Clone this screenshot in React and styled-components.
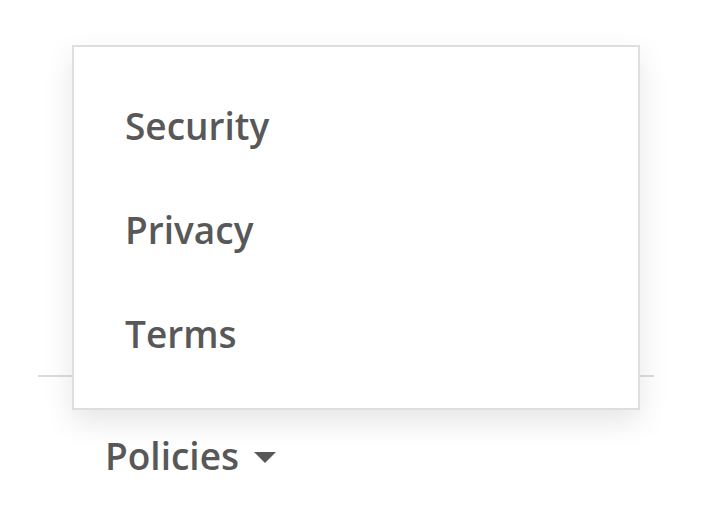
import React from "react";
import styled, { createGlobalStyle } from "styled-components";

const GlobalStyle = createGlobalStyle`
  html, body {
    margin: 0;
    padding: 0;
    background: #ffffff;
  }
  body {
    font-family: "Open Sans", "Noto Sans", sans-serif;
    color: #585858;
  }
`;

const Page = styled.div`
  position: relative;
  width: 716px;
  height: 522px;
  overflow: hidden;
`;

const Footer = styled.footer`
  margin: 375px 0 0 38px;
  width: 616px;
  border-top: 2px solid #dcdcdc;
  padding: 53px 0 0 67px;
  box-sizing: border-box;
`;

const Toggle = styled.button`
  display: flex;
  align-items: center;
  gap: 15px;
  border: none;
  background: none;
  padding: 0;
  font-family: inherit;
  font-size: 37px;
  font-weight: 600;
  color: #585858;
  cursor: pointer;
`;

const Caret = styled.span`
  width: 0;
  height: 0;
  border-left: 11px solid transparent;
  border-right: 11px solid transparent;
  border-top: 11px solid #585858;
  margin-top: 3px;
`;

const Menu = styled.ul`
  position: absolute;
  left: 72px;
  top: 45px;
  width: 568px;
  height: 365px;
  box-sizing: border-box;
  margin: 0;
  padding: 27px 0 0 51px;
  list-style: none;
  background: #ffffff;
  border: 2px solid #dedede;
  box-shadow: 0 12px 28px rgba(0, 0, 0, 0.1);
`;

const MenuItem = styled.li`
  font-size: 37px;
  font-weight: 600;
  line-height: 104px;
  color: #585858;
`;

export default function App() {
  const items = ["Security", "Privacy", "Terms"];
  return (
    <Page>
      <GlobalStyle />
      <Footer>
        <Toggle>
          Policies
          <Caret />
        </Toggle>
      </Footer>
      <Menu>
        {items.map((item) => (
          <MenuItem key={item}>{item}</MenuItem>
        ))}
      </Menu>
    </Page>
  );
}
